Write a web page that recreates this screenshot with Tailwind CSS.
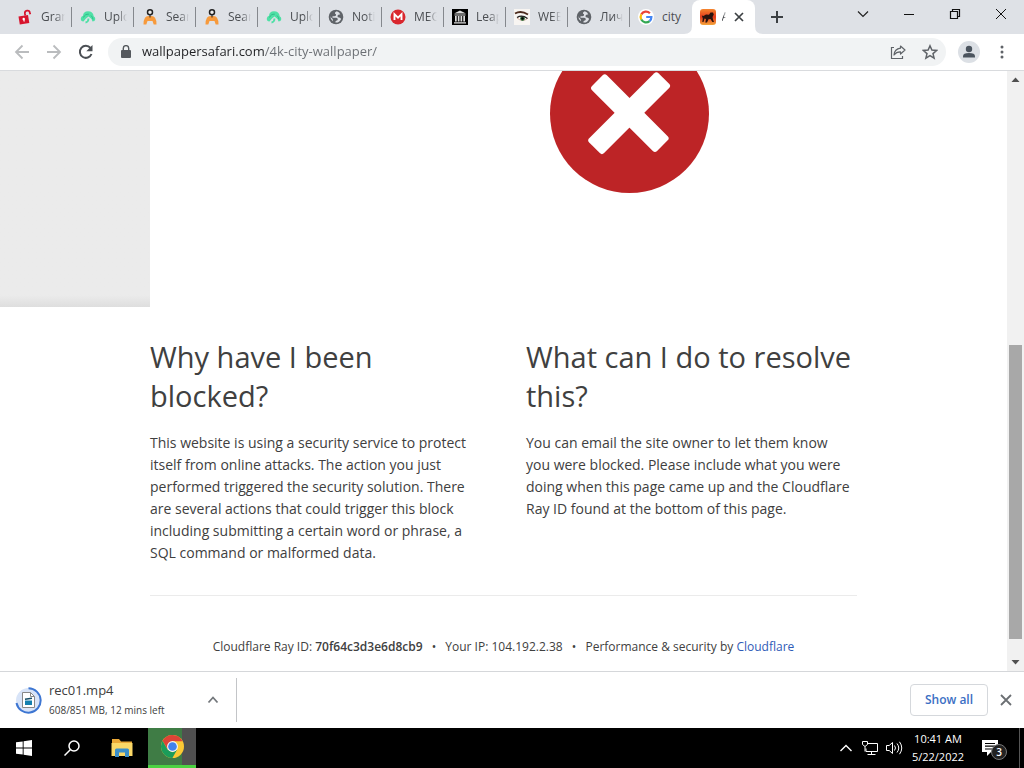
<!DOCTYPE html>
<html lang="en">
<head>
  <meta charset="UTF-8"/>
  <meta name="viewport" content="width=device-width,initial-scale=1"/>
  <title>Attention Required! | Cloudflare</title>
  <script src="https://cdn.jsdelivr.net/npm/@tailwindcss/browser@4"></script>
</head>
<body class="h-screen flex flex-col overflow-hidden bg-white font-['Open_Sans','Noto_Sans',sans-serif] text-[#404040]">

  <!-- shared favicons -->
  <svg class="hidden">
    <symbol id="upload" viewBox="0 0 16 16">
      <path d="M3.500 12.500Q.6 12.300.8 9.500 1 7.200 3 6.800 3.300 2.500 8 2.300q5 0 5.700 5 1.800.8 1.600 2.900-.3 2.200-2.800 2.300l-1-2.500L8.500 7.500 6 9.500z" fill="#4fe0a6"/>
      <path d="M3.500 8.500Q5 4.800 8.800 5.200M11 6.500q1.800 1.500 2 4" stroke="#2fbd8a" stroke-width="1" fill="none"/>
      <path d="M5.500 13.500Q8.500 13 8.500 9.500" stroke="#4fe0a6" stroke-width="1.800" fill="none"/>
    </symbol>
    <symbol id="search-person" viewBox="0 0 16 16">
      <path d="M1.500 15.500Q1.500 11 3 8.800 4 7 6.500 7h3Q12 7 13 8.800q1.500 2.200 1.500 6.700h-2.800L10.500 12h-5l-1.200 3.500z" fill="#f79a3c"/>
      <circle cx="8" cy="3.300" r="2.500" fill="#eee" stroke="#222" stroke-width="1.500"/>
      <path d="M8 6v2.500" stroke="#222"/>
    </symbol>
    <symbol id="globe" viewBox="0 0 16 16">
      <circle cx="8" cy="8" r="7.300" fill="#5f6368"/>
      <path d="M8.800 2.300Q6.500 3 7 4.800q1.500.2 1 1.400-.3 1-1.800 1H4.500v1.500h3.800q1.500.2 1.500 1.600 0 1.400-1.600 1.500-.9.200-.8 1.800 4.200.2 5.700-3.600-.6-1.300-2-1.400-1.800-.2-1.600-1.700.1-1.200 1.600-1.300h1.200q-.6-2.500-3.500-3.300M2.400 7q-.2 3.400 2.500 5.200.4-1.600-.7-2.700Q2.800 8.500 2.400 7" fill="#dee1e6"/>
    </symbol>
  </svg>

  <!-- ─── TAB STRIP ──────────────────────────────────────────────────────────── -->
  <header class="h-[34px] shrink-0 bg-[#dee1e6] flex justify-between">
    <nav class="flex items-center pl-2.5 text-xs text-[#4b4e52]" aria-label="Tabs">
      <button class="w-[62px] h-5 pl-[7px] pr-1.5 flex items-center gap-2 border-r border-[#85888d]">
        <svg class="size-4 shrink-0" viewBox="0 0 16 16"><path d="M1.500 7.500 11 6l1.300 8-9.500 1.600z" fill="#d7142d"/><path d="m8.300 6.500-.4-2a2.500 2.500 0 0 1 5-.8l.3 1.500" fill="none" stroke="#d7142d" stroke-width="1.800"/><circle cx="6.700" cy="10" r="1.200" fill="#fff"/><path d="m6.700 10 .5 2.500" stroke="#fff" stroke-width="1.200"/></svg>
        <span class="flex-1 text-left overflow-hidden whitespace-nowrap [mask-image:linear-gradient(to_right,black_60%,transparent)]">Gram</span>
      </button>
      <button class="w-[62px] h-5 pl-2 pr-1.5 flex items-center gap-2 border-r border-[#85888d]">
        <svg class="size-4 shrink-0"><use href="#upload"/></svg>
        <span class="flex-1 text-left overflow-hidden whitespace-nowrap [mask-image:linear-gradient(to_right,black_60%,transparent)]">Uploa</span>
      </button>
      <button class="w-[62px] h-5 pl-2 pr-1.5 flex items-center gap-2 border-r border-[#85888d]">
        <svg class="size-4 shrink-0"><use href="#search-person"/></svg>
        <span class="flex-1 text-left overflow-hidden whitespace-nowrap [mask-image:linear-gradient(to_right,black_60%,transparent)]">Searc</span>
      </button>
      <button class="w-[62px] h-5 pl-2 pr-1.5 flex items-center gap-2 border-r border-[#85888d]">
        <svg class="size-4 shrink-0"><use href="#search-person"/></svg>
        <span class="flex-1 text-left overflow-hidden whitespace-nowrap [mask-image:linear-gradient(to_right,black_60%,transparent)]">Searc</span>
      </button>
      <button class="w-[62px] h-5 pl-2 pr-1.5 flex items-center gap-2 border-r border-[#85888d]">
        <svg class="size-4 shrink-0"><use href="#upload"/></svg>
        <span class="flex-1 text-left overflow-hidden whitespace-nowrap [mask-image:linear-gradient(to_right,black_60%,transparent)]">Uploa</span>
      </button>
      <button class="w-[62px] h-5 pl-2 pr-1.5 flex items-center gap-2 border-r border-[#85888d]">
        <svg class="size-4 shrink-0"><use href="#globe"/></svg>
        <span class="flex-1 text-left overflow-hidden whitespace-nowrap [mask-image:linear-gradient(to_right,black_60%,transparent)]">Notifi</span>
      </button>
      <button class="w-[62px] h-5 pl-2 pr-1.5 flex items-center gap-2 border-r border-[#85888d]">
        <svg class="size-4 shrink-0" viewBox="0 0 16 16"><circle cx="8" cy="8" r="7.500" fill="#d9272e"/><path d="M4.500 11V5.200L8 8.700l3.500-3.500V11" fill="none" stroke="#fff" stroke-width="1.900"/></svg>
        <span class="flex-1 text-left overflow-hidden whitespace-nowrap [mask-image:linear-gradient(to_right,black_60%,transparent)]">MEGA</span>
      </button>
      <button class="w-[62px] h-5 pl-2 pr-1.5 flex items-center gap-2 border-r border-[#85888d]">
        <svg class="size-4 shrink-0" viewBox="0 0 16 16"><path d="M0 0h16v16H0z"/><path d="M2 4.500 8 1.500l6 3zM2.500 5.500h11v1h-11zM3 7h1.700v5.500H3zm2.800 0h1.700v5.500H5.800zm2.700 0h1.700v5.500H8.500zm2.800 0H13v5.500h-1.700zM2 13.300h12v1.200H2z" fill="#ddd"/></svg>
        <span class="flex-1 text-left overflow-hidden whitespace-nowrap [mask-image:linear-gradient(to_right,black_60%,transparent)]">Leap</span>
      </button>
      <button class="w-[62px] h-5 pl-2 pr-1.5 flex items-center gap-2 border-r border-[#85888d]">
        <svg class="size-4 shrink-0" viewBox="0 0 16 16"><path d="M0 0h16v16H0z" fill="#f8f5f2"/><path d="M1 4.500q6-3.500 13 1" fill="none" stroke="#4d2b1d" stroke-width="1.800"/><path d="M3 9q4.500-3.500 10.500.5-5 4-10.500-.5" fill="#fff" stroke="#c9917a" stroke-width=".7"/><circle cx="8.500" cy="9.500" r="2.400" fill="#397342"/><circle cx="8.500" cy="9.500" r="1.300"/><path d="M3 8.500q5-3 10.500 1" fill="none" stroke="#222" stroke-width="1.200"/></svg>
        <span class="flex-1 text-left overflow-hidden whitespace-nowrap [mask-image:linear-gradient(to_right,black_60%,transparent)]">WEB</span>
      </button>
      <button class="w-[62px] h-5 pl-2 pr-1.5 flex items-center gap-2 border-r border-[#85888d]">
        <svg class="size-4 shrink-0"><use href="#globe"/></svg>
        <span class="flex-1 text-left overflow-hidden whitespace-nowrap [mask-image:linear-gradient(to_right,black_60%,transparent)]">Личн</span>
      </button>
      <button class="w-[62px] h-5 pl-2 pr-1.5 flex items-center gap-2">
        <svg class="size-4 shrink-0" viewBox="0 0 16 16"><circle cx="8" cy="8" r="8" fill="#fff"/><g fill="none" stroke-width="2.200"><path d="M11.900 4.200A5.400 5.400 0 0 0 3.300 5.400" stroke="#ea4335"/><path d="M3.300 5.400a5.400 5.400 0 0 0 0 5.200" stroke="#fbbc05"/><path d="M3.300 10.600a5.400 5.400 0 0 0 8.300 1.500" stroke="#34a853"/><path d="M8.200 8h5.200a5.400 5.400 0 0 1-1.800 4.100" stroke="#4285f4"/></g></svg>
        <span class="flex-1 text-left whitespace-nowrap">city</span>
      </button>
      <!-- active tab, with the curved feet -->
      <div class="flex self-stretch items-end">
        <svg class="-ml-2 size-2" viewBox="0 0 8 8"><path d="M8 0v8H0q8 0 8-8" fill="#fff"/></svg>
        <div class="w-[63px] h-full bg-white rounded-t-lg px-2 flex items-center justify-between">
          <svg class="size-4 shrink-0" viewBox="0 0 16 16"><defs><linearGradient id="sun" x2="0" y2="1"><stop stop-color="#f4872f"/><stop offset=".5" stop-color="#e5391c"/><stop offset="1" stop-color="#f4a53a"/></linearGradient></defs><rect width="16" height="16" rx="3" fill="url(#sun)"/><path d="M3.500 7 6 5.500l3 .3L10.500 3.500h2.500l.8 2-1.300 2.500.5 2.500 1 2.500h-1.600L10.500 10l-2 .3L7 13.500H5.300L6 10l-1.500-.5L3.500 13H2.300l.5-3.500-1-3z" fill="#29130e"/></svg>
          <span class="w-1 overflow-hidden whitespace-nowrap [mask-image:linear-gradient(to_right,black_40%,transparent)]">Attention</span>
          <button aria-label="Close tab"><svg class="size-4" viewBox="0 0 16 16"><path d="m4 4 8 8m0-8-8 8" stroke="#3c4043" stroke-width="1.700"/></svg></button>
        </div>
        <svg class="size-2" viewBox="0 0 8 8"><path d="M0 0v8h8Q0 8 0 0" fill="#fff"/></svg>
      </div>
      <button class="ml-1.5" aria-label="New tab"><svg class="size-4" viewBox="0 0 16 16"><path d="M8 2v12M2 8h12" stroke="#3c4043" stroke-width="2"/></svg></button>
    </nav>
    <div class="flex h-7">
      <button class="w-[46px] grid place-items-center" aria-label="Search tabs"><svg class="size-3" viewBox="0 0 12 12"><path d="m1 3.500 5 5 5-5" fill="none" stroke="#222" stroke-width="1.200"/></svg></button>
      <button class="w-[46px] grid place-items-center" aria-label="Minimize"><svg class="size-3" viewBox="0 0 12 12"><path d="M1 6.500h10" stroke="#111"/></svg></button>
      <button class="w-[46px] grid place-items-center" aria-label="Restore"><svg class="size-3" viewBox="0 0 12 12"><path d="M1.500 3.500h7v7h-7zM3.500 3.500v-2h7v7h-2" fill="none" stroke="#111" stroke-width="1.200"/></svg></button>
      <button class="w-[46px] grid place-items-center" aria-label="Close"><svg class="size-3" viewBox="0 0 12 12"><path d="m1 1 10 10M11 1 1 11" stroke="#111"/></svg></button>
    </div>
  </header>

  <!-- ─── TOOLBAR ────────────────────────────────────────────────────────────── -->
  <div class="h-[37px] shrink-0 border-b border-[#d9dbde] flex items-center px-3.5">
    <div class="flex gap-4 items-center">
      <button aria-label="Back"><svg class="size-4" viewBox="0 0 16 16"><path d="M15 8H2m6.500-6.500L2 8l6.500 6.500" fill="none" stroke="#babcbe" stroke-width="1.800"/></svg></button>
      <button aria-label="Forward"><svg class="size-4" viewBox="0 0 16 16"><path d="M1 8h13M7.500 1.500 14 8l-6.500 6.500" fill="none" stroke="#babcbe" stroke-width="1.800"/></svg></button>
      <button aria-label="Reload"><svg class="size-4" viewBox="0 0 16 16"><path d="M13.500 10A6 6 0 1 1 12.500 4" fill="none" stroke="#4b4f54" stroke-width="2"/><path d="M14.500 1v6.200H8.300z" fill="#4b4f54"/></svg></button>
    </div>
    <div class="ml-3.5 flex-1 h-7 rounded-full bg-[#f1f3f4] flex items-center pl-[13px] pr-2 gap-[11px]">
      <svg class="w-2.5 h-3.5" viewBox="0 0 10 14"><rect y="5" width="10" height="8" rx="1" fill="#55595e"/><path d="M2.300 5.500V3.300a2.700 2.700 0 0 1 5.400 0v2.200" fill="none" stroke="#55595e" stroke-width="1.400"/></svg>
      <!-- host dark, path grey -->
      <input class="flex-1 min-w-0 text-[13px] outline-none text-transparent bg-clip-text bg-[linear-gradient(to_right,#202124_122px,#6a6e73_122px)]" type="text" aria-label="Address" value="wallpapersafari.com/4k-city-wallpaper/"/>
      <button aria-label="Share"><svg class="size-4" viewBox="0 0 16 16"><path d="M4 3.500H1.500v11h11V12" fill="none" stroke="#5f6368" stroke-width="1.200"/><path d="M10.500 2 15 6l-4.500 4V7.800Q6.500 7.600 4 11q.5-6 6.500-6.800z" fill="none" stroke="#5f6368" stroke-width="1.200" stroke-linejoin="round"/></svg></button>
      <button class="ml-[5px]" aria-label="Bookmark"><svg class="size-4" viewBox="0 0 16 16"><path d="m8 1.800 1.900 4.300 4.700.4L11 9.600l1.100 4.600L8 11.700l-4.100 2.500L5 9.600 1.400 6.500l4.700-.4z" fill="none" stroke="#5f6368" stroke-width="1.500"/></svg></button>
    </div>
    <button class="ml-3" aria-label="Profile"><svg class="size-[22px]" viewBox="0 0 22 22"><circle cx="11" cy="11" r="11" fill="#dce0e5"/><circle cx="11" cy="8" r="3.200" fill="#4b545e"/><path d="M5 16.500v-1.200q0-3.300 6-3.300t6 3.300v1.200z" fill="#4b545e"/></svg></button>
    <button class="ml-3.5" aria-label="Menu"><svg class="size-4" viewBox="0 0 16 16"><g fill="#5f6368"><circle cx="8" cy="3" r="1.500"/><circle cx="8" cy="8" r="1.500"/><circle cx="8" cy="13" r="1.500"/></g></svg></button>
  </div>

  <!-- ─── PAGE ───────────────────────────────────────────────────────────────── -->
  <div class="flex-1 min-h-0 flex">
    <main class="flex-1 min-w-0 overflow-hidden">
      <div class="h-[236px] flex">
        <div class="w-[150px] shrink-0 bg-linear-to-b from-[#ebebeb] from-95% to-[#dedede]"></div>
        <div class="flex-1 pl-[400px] overflow-hidden">
          <svg class="w-[159px] h-[122px]" viewBox="0 38 159 122">
            <circle cx="79.500" cy="80.500" r="79.500" fill="#bd2426"/>
            <g fill="#fff" transform="translate(79.500 80.500)">
              <rect x="-46" y="-11" width="92" height="21" rx="3" transform="rotate(45)"/>
              <rect x="-49" y="-11" width="98" height="21" rx="3" transform="rotate(-45)"/>
            </g>
          </svg>
        </div>
      </div>

      <div class="px-[150px] pt-[30px]">
        <div class="grid grid-cols-2 gap-[45px]">
          <section>
            <h2 class="text-[29px] leading-[39px]">Why have I been blocked?</h2>
            <p class="mt-[17px] text-[14px] leading-[22px]">This website is using a security service to protect itself from online attacks. The action you just performed triggered the security solution. There are several actions that could trigger this block including submitting a certain word or phrase, a SQL command or malformed data.</p>
          </section>
          <section>
            <h2 class="text-[29px] leading-[39px]">What can I do to resolve this?</h2>
            <p class="mt-[17px] text-[14px] leading-[22px]">You can email the site owner to let them know<br/> you were blocked. Please include what you were<br/> doing when this page came up and the Cloudflare<br/> Ray ID found at the bottom of this page.</p>
          </section>
        </div>
        <footer class="mt-[31px] border-t border-[#ebebeb] pt-[41px] text-center text-[12px] leading-5">
          <span>Cloudflare Ray ID: <strong class="font-semibold">70f64c3d3e6d8cb9</strong></span>
          <span class="mx-1.5">•</span>
          <span>Your IP: 104.192.2.38</span>
          <span class="mx-1.5">•</span>
          <span>Performance &amp; security by <a href="#" class="text-[#2f5bb7]">Cloudflare</a></span>
        </footer>
      </div>
    </main>

    <!-- scrollbar -->
    <div class="w-[17px] shrink-0 bg-[#f1f1f1] flex flex-col items-center">
      <svg class="size-[17px] shrink-0" viewBox="0 0 17 17"><path d="m4.500 11 4-4.500 4 4.500z" fill="#505050"/></svg>
      <div class="flex-[257]"></div>
      <div class="flex-[294] w-[13px] bg-[#a8a8a8]"></div>
      <div class="flex-[15]"></div>
      <svg class="size-[17px] shrink-0" viewBox="0 0 17 17"><path d="m4.500 6 4 4.500 4-4.500z" fill="#505050"/></svg>
    </div>
  </div>

  <!-- ─── DOWNLOADS ──────────────────────────────────────────────────────────── -->
  <div class="h-[57px] shrink-0 border-t border-[#d5d7da] flex items-center justify-between pr-2.5">
    <div class="w-[237px] h-11 border-r border-[#c3c5c8] flex items-center pl-[15px] pr-[17px]">
      <svg class="size-[27px] shrink-0" viewBox="0 0 27 27"><circle cx="13.500" cy="13.500" r="12.500" fill="#d8e4f8"/><path d="M13.500 1.300A12.200 12.200 0 1 1 1.500 16" fill="none" stroke="#3d76d2" stroke-width="2"/><path d="M7.500 5.500h8l4 4v11h-12z" fill="#fff" stroke="#888"/><path d="M15.500 5.500v4h4" fill="none" stroke="#888"/><path d="M10 13.500h7V18h-7z" fill="#137fae"/><path d="m10 12.300 7-1" stroke="#164e68" stroke-width="1.500"/></svg>
      <div class="ml-[7px] flex-1 whitespace-nowrap">
        <p class="text-[13px] leading-5">rec01.mp4</p>
        <p class="text-[10px] leading-5">608/851 MB, 12 mins left</p>
      </div>
      <button aria-label="Download options"><svg class="size-3" viewBox="0 0 12 12"><path d="m1.500 8.500 4.500-5 4.500 5" fill="none" stroke="#73777b" stroke-width="1.800"/></svg></button>
    </div>
    <div class="flex items-center gap-2.5">
      <button class="h-8 w-[78px] rounded border border-[#d5d8dc] text-[12px] font-semibold text-[#3b6fc4]">Show all</button>
      <button aria-label="Close downloads"><svg class="size-4" viewBox="0 0 16 16"><path d="m3 3 10 10m0-10L3 13" stroke="#6b6f73" stroke-width="1.800"/></svg></button>
    </div>
  </div>

  <!-- ─── TASKBAR ────────────────────────────────────────────────────────────── -->
  <footer class="h-10 shrink-0 bg-black text-white flex justify-between">
    <div class="flex">
      <button class="w-12 grid place-items-center" aria-label="Start"><svg class="size-4" viewBox="0 0 16 16"><path d="m0 2.300 6.700-.9v6.100H0zm7.600-1L16 0v7.500H7.600zM0 8.400h6.700v6.200L0 13.700zm7.600 0H16V16l-8.400-1.200z" fill="#fff"/></svg></button>
      <button class="w-12 grid place-items-center" aria-label="Search"><svg class="size-4" viewBox="0 0 16 16"><circle cx="10" cy="6" r="5" fill="none" stroke="#fff" stroke-width="1.500"/><path d="M6.500 9.500.5 15.500" stroke="#fff" stroke-width="1.500"/></svg></button>
      <button class="w-[52px] grid place-items-center" aria-label="File Explorer"><svg class="w-[22px] h-5" viewBox="0 0 22 20"><path d="M1 1h7l2 2.500h11V18H1z" fill="#eba937"/><path d="M.5 5h21v13H.5z" fill="#fbd867"/><path d="M4 19v-7q0-1.500 1.500-1.500h11Q18 10.500 18 12v7h-4v-4.500H8V19z" fill="#3c8fc9"/></svg></button>
      <button class="w-12 grid place-items-center border-b-3 border-[#4bd241] bg-[linear-gradient(to_right,#3f7c45_34px,#505050_34px)]" aria-label="Chrome">
        <svg class="size-[23px]" viewBox="0 0 24 24"><circle cx="12" cy="12" r="12" fill="#fbc934"/><path d="M1.600 6A12 12 0 0 1 22.500 6.400H12L7 15z" fill="#dc4437"/><path d="m1.600 6 5.200 9L12 18l4.900-3-5 9A12 12 0 0 1 1.600 6" fill="#1b9c5a"/><circle cx="12" cy="12" r="5.700" fill="#f4f4f4"/><circle cx="12" cy="12" r="4.500" fill="#4182ec"/></svg>
      </button>
    </div>
    <div class="flex items-center pr-1">
      <button aria-label="Hidden icons"><svg class="size-4" viewBox="0 0 16 16"><path d="M2.500 11 8 5.500l5.500 5.500" fill="none" stroke="#fff" stroke-width="1.400"/></svg></button>
      <button class="ml-[7px]" aria-label="Network"><svg class="size-[18px]" viewBox="0 0 18 18"><path d="M7 4.500h9.500v8H5V9.500M10.500 12.500v3M6.500 15.500h8M1.500 2.500h5v3l-2.500 2-2.500-2zM4 7.500v5" fill="none" stroke="#fff"/></svg></button>
      <button class="ml-1.5" aria-label="Volume"><svg class="size-[18px]" viewBox="0 0 18 18"><path d="M1.500 6.500h2.700l3.300-3v11l-3.300-3H1.500zM9.500 6.500q2 2.500 0 5M12 4.500q3.500 4.500 0 9M14.500 2.800q4.500 6.200 0 12.400" fill="none" stroke="#fff"/></svg></button>
      <div class="ml-[3px] w-[64px] text-center text-[11px] leading-[18px]">
        <p>10:41 AM</p>
        <p>5/22/2022</p>
      </div>
      <button class="ml-3 w-[25px] h-6 relative" aria-label="Notifications">
        <svg class="size-4" viewBox="0 0 16 16"><path d="M0 0h16v12H9l-4 4v-4H0z" fill="#fff"/><path d="M3 3.500h10M3 6.200h10M3 9h10" stroke="#000" stroke-width="1.200"/></svg>
        <span class="absolute right-0 bottom-0 size-4 rounded-full border border-[#777] bg-[#222] text-[10px] leading-[14px] font-semibold text-center">3</span>
      </button>
      <div class="ml-3 h-full border-l border-[#555]"></div>
    </div>
  </footer>

</body>
</html>
